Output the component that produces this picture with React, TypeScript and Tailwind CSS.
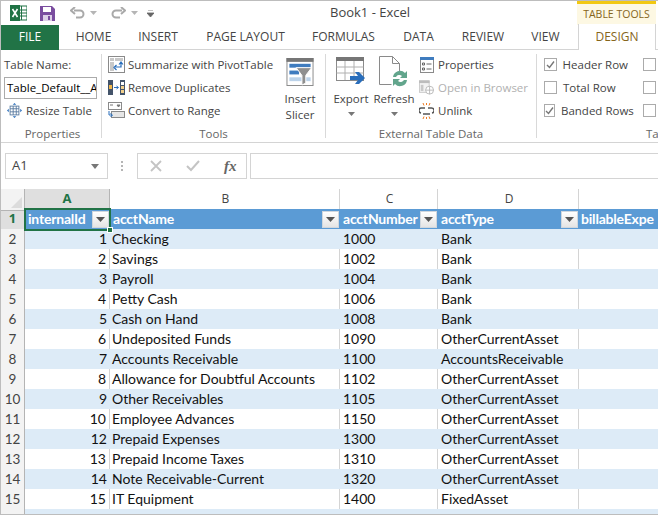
import React from "react";

const ui = { fontFamily: '"Open Sans","Noto Sans",sans-serif' };
const cellFont = { fontFamily: 'Lato,"Open Sans",sans-serif' };

const rows: [number, string, string, string][] = [
  [1, "Checking", "1000", "Bank"],
  [2, "Savings", "1002", "Bank"],
  [3, "Payroll", "1004", "Bank"],
  [4, "Petty Cash", "1006", "Bank"],
  [5, "Cash on Hand", "1008", "Bank"],
  [6, "Undeposited Funds", "1090", "OtherCurrentAsset"],
  [7, "Accounts Receivable", "1100", "AccountsReceivable"],
  [8, "Allowance for Doubtful Accounts", "1102", "OtherCurrentAsset"],
  [9, "Other Receivables", "1105", "OtherCurrentAsset"],
  [10, "Employee Advances", "1150", "OtherCurrentAsset"],
  [12, "Prepaid Expenses", "1300", "OtherCurrentAsset"],
  [13, "Prepaid Income Taxes", "1310", "OtherCurrentAsset"],
  [14, "Note Receivable-Current", "1320", "OtherCurrentAsset"],
  [15, "IT Equipment", "1400", "FixedAsset"],
];

const cols = "grid grid-cols-[24px_85px_230px_98px_141px_79px]";

function Filter() {
  return (
    <span className="flex h-[17px] w-[17px] shrink-0 items-center justify-center border border-[#d0d7de] bg-gradient-to-b from-white to-[#e4e4e4]">
      <svg width="9" height="5" viewBox="0 0 9 5"><path d="M0 0h9L4.500 5z" fill="#555" /></svg>
    </span>
  );
}

function HeaderCell({ label }: { label: string }) {
  return (
    <div className="flex h-5 items-center justify-between overflow-hidden pl-[3px] pr-px">
      <span className="text-[14px] leading-[22px] font-bold tracking-[-0.2px] whitespace-nowrap text-white">{label}</span>
      <Filter />
    </div>
  );
}

function Tab({ label, w }: { label: string; w: string }) {
  return <div className={`flex h-[25px] items-center justify-center text-[12px] text-[#444] ${w}`}>{label}</div>;
}

function RibbonRow({ icon, label, muted }: { icon: React.ReactNode; label: string; muted?: boolean }) {
  return (
    <div className={`flex h-[23px] items-center gap-[3px] text-[11.500px] whitespace-nowrap ${muted ? "text-[#b1b1b1]" : "text-[#444]"}`}>
      <span className="flex w-[17px] justify-center">{icon}</span>
      {label}
    </div>
  );
}

function Check({ label, checked }: { label?: string; checked?: boolean }) {
  return (
    <div className="flex h-[23px] items-center gap-[6px] text-[11.500px] whitespace-nowrap text-[#444]">
      <span className="flex h-[13px] w-[13px] items-center justify-center border border-[#ababab] bg-white">
        {checked && (
          <svg width="9" height="9" viewBox="0 0 9 9"><path d="M1 5l2.500 2.500L8 1.500" fill="none" stroke="#777" strokeWidth="1.400" /></svg>
        )}
      </span>
      {label}
    </div>
  );
}

function GroupLabel({ label }: { label: string }) {
  return <div className="mt-auto text-center text-[11.500px] leading-[16px] whitespace-nowrap text-[#666]">{label}</div>;
}

function Separator() {
  return <div className="my-[4px] w-px shrink-0 bg-[#d9d9d9]" />;
}

function GridRow({ n, data }: { n: number; data: [number, string, string, string] }) {
  const band = n % 2 === 0;
  const fill = band ? "bg-[#ddebf7]" : "bg-white border-r border-[#d4d4d4]";
  return (
    <div className={`${cols} h-5 text-[14px] text-[#111]`}>
      <div className="flex items-center justify-center border-r border-b border-[#b4b4b4] bg-[#f3f3f3] text-[13.500px] text-[#444]">{n}</div>
      <div className={`border-b border-b-[#9bc2e6] pr-[3px] text-right leading-[20px] ${fill}`}>{data[0]}</div>
      <div className={`border-b border-b-[#9bc2e6] pl-[2px] leading-[20px] whitespace-nowrap ${fill}`}>{data[1]}</div>
      <div className={`border-b border-b-[#9bc2e6] pl-[3px] leading-[20px] ${fill}`}>{data[2]}</div>
      <div className={`border-b border-b-[#9bc2e6] pl-[3px] leading-[20px] whitespace-nowrap ${fill}`}>{data[3]}</div>
      <div className={`border-b border-[#9bc2e6] ${band ? "bg-[#ddebf7]" : "bg-white"}`} />
    </div>
  );
}

const PivotIcon = (
  <svg width="17" height="17" viewBox="0 0 17 17">
    <rect x=".5" y=".5" width="16" height="16" fill="#fff" stroke="#8a8a8a" />
    <path d="M2 2h4v3H2zM7 2h8v3H7zM2 6h4v9H2z" fill="#c8c8c8" />
    <path d="M13 7v4H7m1.500-2L6 11.500 8.500 14M11 8.500L13 6l2 2.500" fill="none" stroke="#2a6ebb" strokeWidth="1.200" />
  </svg>
);
const DupIcon = (
  <svg width="17" height="17" viewBox="0 0 17 17">
    <rect x="0" y="1" width="5" height="15" fill="#44546a" />
    <rect x="1" y="6" width="3" height="4" fill="#f2b84b" />
    <rect x="12" y="1" width="5" height="15" fill="#44546a" />
    <rect x="13" y="3" width="3" height="3" fill="#fff" />
    <rect x="13" y="7" width="3" height="3" fill="#f2cf8a" />
    <rect x="13" y="11" width="3" height="3" fill="#f2cf8a" />
    <path d="M6 8.500h4m-1.500-1.500L10.500 8.500 8.500 10" fill="none" stroke="#2a6ebb" />
  </svg>
);
const ConvertIcon = (
  <svg width="17" height="17" viewBox="0 0 17 17">
    <rect x=".5" y=".5" width="13" height="7" fill="#fff" stroke="#8a8a8a" />
    <path d="M2 3h3M9 3l1.500 2L12 3z" fill="#777" stroke="#777" />
    <rect x="3.500" y="9.500" width="13" height="6" fill="#e6e6e6" stroke="#8a8a8a" />
    <path d="M1 9v4h3M2.500 11.500L4.500 13 2.500 15" fill="none" stroke="#2a6ebb" />
  </svg>
);
const ResizeIcon = (
  <svg width="15" height="15" viewBox="0 0 17 17">
    <rect x="3.500" y="3.500" width="10" height="10" fill="#fff" stroke="#56789e" />
    <path d="M3.500 6.500h10M3.500 10h10M7 3.500v10M10.500 3.500v10" stroke="#56789e" fill="none" />
    <path d="M8.500 0l2 2h-4zM8.500 17l2-2h-4zM0 8.500l2-2v4zM17 8.500l-2-2v4z" fill="#2a6ebb" />
  </svg>
);
const SlicerIcon = (
  <svg width="28" height="28" viewBox="0 0 28 29">
    <rect x=".5" y=".5" width="27" height="28" fill="#fff" stroke="#8a8a8a" />
    <rect x="0" y="0" width="28" height="4" fill="#767676" />
    <rect x="3" y="6" width="22" height="4" fill="#3f7cbf" />
    <rect x="3" y="13" width="10" height="4" fill="#3f7cbf" />
    <rect x="3" y="20" width="22" height="4" fill="#bcd3ea" />
    <path d="M10 10h16l-6 8v8l-4 2V18z" fill="#8f8f8f" stroke="#fff" />
  </svg>
);
const ExportIcon = (
  <svg width="31" height="29" viewBox="0 0 31 29">
    <rect x=".5" y=".5" width="27" height="23" fill="#fff" stroke="#8a8a8a" />
    <rect x="0" y="0" width="28" height="4" fill="#767676" />
    <path d="M.5 10h27M.5 16h27M9 4v19M18 4v19" stroke="#b0b0b0" />
    <path d="M14 19h8l-3-4h4l6 6-6 6h-4l3-4h-8z" fill="#2a6ebb" />
  </svg>
);
const RefreshIcon = (
  <svg width="30" height="31" viewBox="0 0 30 31">
    <path d="M.5.500h13l7 7v9M.5.500v28h12" fill="none" stroke="#8a8a8a" />
    <path d="M13.500.500v7h7" fill="none" stroke="#8a8a8a" />
    <path d="M14 21a7 7 0 0 1 12-4l2-2v7h-7l2-2a4 4 0 0 0-6 1zM28 24a7 7 0 0 1-12 4l-2 2v-7h7l-2 2a4 4 0 0 0 6-1z" fill="#62a58c" />
  </svg>
);
const PropsIcon = (
  <svg width="14" height="16" viewBox="0 0 14 16">
    <rect x=".5" y=".5" width="13" height="15" fill="#fff" stroke="#8a8a8a" />
    <rect x="0" y="0" width="14" height="3" fill="#3f7cbf" />
    <path d="M2.500 6h2v2h-2zM2.500 11h2v2h-2z" fill="none" stroke="#666" />
    <path d="M6.500 7h5M6.500 12h5" stroke="#666" />
  </svg>
);
const BrowserIcon = (
  <svg width="15" height="15" viewBox="0 0 17 16">
    <rect x=".5" y=".5" width="11" height="13" fill="#f2f2f2" stroke="#c8c8c8" />
    <rect x="0" y="0" width="12" height="3" fill="#bcbcbc" />
    <rect x="2" y="5" width="3" height="7" fill="#c8c8c8" />
    <circle cx="12" cy="11" r="4.500" fill="#fff" stroke="#b5b5b5" />
    <path d="M7.500 11h9M12 6.500v9" stroke="#b5b5b5" />
  </svg>
);
const UnlinkIcon = (
  <svg width="15" height="16" viewBox="0 0 15 16">
    <path d="M6 5H3a2.500 2.500 0 0 0-1 5M9 5h3a2.500 2.500 0 0 1 1 5M4 11h7" fill="none" stroke="#555" strokeWidth="1.500" />
    <path d="M4 0l1 2.500M11 0l-1 2.500M4 16l1-2.500M11 16l-1-2.500M7.500 0v2M7.500 14v2" stroke="#ee7b22" />
  </svg>
);

function Caret() {
  return <svg width="7" height="4" viewBox="0 0 7 4"><path d="M0 0h7L3.500 4z" fill="#777" /></svg>;
}

export default function App() {
  return (
    <div style={ui} className="flex h-[515px] w-[658px] flex-col overflow-hidden border-t border-b border-l border-[#bdbdbd] bg-white">
      {/* title bar */}
      <div className="flex h-[24px] shrink-0 items-center">
        <svg className="ml-[9px]" width="17" height="16" viewBox="0 0 17 16">
          <rect x="6" y="1" width="11" height="14" fill="#fff" stroke="#1f7244" />
          <path d="M6 5h11M6 8h11M6 11h11M11.500 1v14" stroke="#1f7244" />
          <rect x="0" y="0" width="10" height="16" fill="#1f7244" />
          <path d="M2.500 4l5 8M7.500 4l-5 8" stroke="#fff" strokeWidth="1.600" />
        </svg>
        <svg className="ml-[13px]" width="15" height="15" viewBox="0 0 15 15">
          <path d="M0 0h12l3 3v12H0z" fill="#7a4d9f" />
          <rect x="3" y="1" width="8" height="5" fill="#fff" />
          <rect x="3" y="9" width="9" height="6" fill="#ddd0e8" />
          <rect x="8" y="10" width="2" height="4" fill="#7a4d9f" />
        </svg>
        <svg className="ml-[15px]" width="15" height="13" viewBox="0 0 15 13">
          <path d="M4 3.500h6a3.500 3.500 0 0 1 0 7H6M5 0L1 3.500 5 7" fill="none" stroke="#a9a9a9" strokeWidth="2" />
        </svg>
        <svg className="ml-[5px]" width="7" height="4" viewBox="0 0 7 4"><path d="M0 0h7L3.500 4z" fill="#b5b5b5" /></svg>
        <svg className="ml-[14px]" width="15" height="13" viewBox="0 0 15 13">
          <path d="M11 3.500H5a3.500 3.500 0 0 0 0 7h4M10 0l4 3.500L10 7" fill="none" stroke="#a9a9a9" strokeWidth="2" />
        </svg>
        <svg className="ml-[5px]" width="7" height="4" viewBox="0 0 7 4"><path d="M0 0h7L3.500 4z" fill="#b5b5b5" /></svg>
        <svg className="ml-[9px]" width="7" height="7" viewBox="0 0 7 7"><path d="M1 0h5M0 3h7L3.500 7z" stroke="#666" fill="#666" strokeWidth=".8" /></svg>
        <div className="ml-[176px] w-[82px] text-[13px] whitespace-nowrap text-[#444]">Book1 - Excel</div>
        <div className="ml-[165px] flex h-[24px] w-[79px] items-center justify-center border-t-[3px] border-[#f2c811] bg-[#fdf8e3] text-[10.500px] whitespace-nowrap text-[#86651a]">
          TABLE TOOLS
        </div>
      </div>

      {/* tabs */}
      <div className="relative flex h-[25px] shrink-0 items-center border-b border-[#d4d4d4]">
        <div className="flex h-[25px] w-[58px] items-center justify-center bg-[#217346] text-[12px] text-white">FILE</div>
        <Tab label="HOME" w="w-[69px]" />
        <Tab label="INSERT" w="w-[60px]" />
        <Tab label="PAGE LAYOUT" w="w-[115px]" />
        <Tab label="FORMULAS" w="w-[81px]" />
        <Tab label="DATA" w="w-[69px]" />
        <Tab label="REVIEW" w="w-[60px]" />
        <Tab label="VIEW" w="w-[65px]" />
        <div className="flex h-[26px] w-[78px] items-center justify-center border-x border-[#d4d4d4] bg-white text-[12px] text-[#86651a]">DESIGN</div>
      </div>

      {/* ribbon */}
      <div className="flex h-[93px] shrink-0 border-b border-[#d4d4d4]">
        <div className="flex w-[100px] shrink-0 flex-col pt-[3px] pl-[3px]">
          <div className="flex h-[23px] items-center text-[11.500px] whitespace-nowrap text-[#444]">Table Name:</div>
          <div className="flex h-[23px] items-center">
            <div className="flex h-[22px] w-[93px] items-center overflow-hidden border border-[#ababab] pl-[2px] text-[11.500px] whitespace-nowrap text-black">Table_Default__A</div>
          </div>
          <div className="pl-[2px]">
            <RibbonRow icon={ResizeIcon} label="Resize Table" />
          </div>
          <GroupLabel label="Properties" />
        </div>
        <Separator />
        <div className="flex w-[223px] shrink-0 flex-col pt-[3px]">
          <div className="flex pl-[6px]">
            <div className="w-[177px]">
              <RibbonRow icon={PivotIcon} label="Summarize with PivotTable" />
              <RibbonRow icon={DupIcon} label="Remove Duplicates" />
              <RibbonRow icon={ConvertIcon} label="Convert to Range" />
            </div>
            <div className="flex w-[30px] flex-col items-center pt-[5px] text-center text-[11.500px] leading-[16px] text-[#444]">
              {SlicerIcon}
              <div className="mt-[5px]">Insert</div>
              <div>Slicer</div>
            </div>
          </div>
          <GroupLabel label="Tools" />
        </div>
        <Separator />
        <div className="flex w-[210px] shrink-0 flex-col pt-[3px]">
          <div className="flex">
            <div className="flex w-[46px] flex-col items-center pt-[4px] pl-[4px] text-[11.500px] text-[#444]">
              {ExportIcon}
              <div className="mt-[5px] leading-[16px]">Export</div>
              <div className="mt-[5px]"><Caret /></div>
            </div>
            <div className="flex w-[44px] flex-col items-center pt-[3px] text-[11.500px] text-[#444]">
              {RefreshIcon}
              <div className="mt-[4px] leading-[16px]">Refresh</div>
              <div className="mt-[5px]"><Caret /></div>
            </div>
            <div className="pl-[2px]">
              <RibbonRow icon={PropsIcon} label="Properties" />
              <RibbonRow icon={BrowserIcon} label="Open in Browser" muted />
              <RibbonRow icon={UnlinkIcon} label="Unlink" />
            </div>
          </div>
          <GroupLabel label="External Table Data" />
        </div>
        <Separator />
        <div className="flex min-w-0 flex-1 flex-col pt-[3px] pl-[7px]">
          <div className="flex gap-[15px]">
            <div className="w-[84px]">
              <Check label="Header Row" checked />
              <Check label="Total Row" />
              <Check label="Banded Rows" checked />
            </div>
            <div>
              <Check />
              <Check />
              <Check />
            </div>
          </div>
          <div className="mt-auto pl-[102px] text-[11.500px] leading-[16px] text-[#666]">Ta</div>
        </div>
      </div>

      {/* formula bar */}
      <div className="flex h-[46px] shrink-0 items-center">
        <div className="ml-[4px] flex h-[26px] w-[103px] items-center justify-between border border-[#d4d4d4] pr-[8px] pl-[6px] text-[13px] text-[#444]">
          A1
          <svg width="8" height="5" viewBox="0 0 8 5"><path d="M0 0h8L4 5z" fill="#777" /></svg>
        </div>
        <svg className="mx-[13px]" width="3" height="11" viewBox="0 0 3 11"><path d="M0 0h2v2H0zM0 4h2v2H0zM0 8h2v2H0z" fill="#b5b5b5" /></svg>
        <div className="flex h-[26px] w-[110px] items-center border border-[#d4d4d4] pl-[12px]">
          <svg width="12" height="12" viewBox="0 0 12 12"><path d="M1 1l10 10M11 1L1 11" stroke="#c4c4c4" strokeWidth="1.800" /></svg>
          <svg className="ml-[24px]" width="14" height="12" viewBox="0 0 14 12"><path d="M1 6l4 4 8-9" fill="none" stroke="#c4c4c4" strokeWidth="2" /></svg>
          <span className="ml-[24px] text-[15px] font-bold text-[#666] italic" style={{ fontFamily: '"Liberation Serif",serif' }}>fx</span>
        </div>
        <div className="ml-[3px] h-[26px] flex-1 border-y border-l border-[#d4d4d4]" />
      </div>

      {/* sheet */}
      <div style={cellFont} className="flex min-h-0 flex-1 flex-col">
        <div style={ui} className={`${cols} h-5 shrink-0 text-[12px] text-[#444]`}>
          <div className="relative border-r border-b border-[#b4b4b4] bg-[#f3f3f3]">
            <svg className="absolute right-[2px] bottom-[2px]" width="11" height="11" viewBox="0 0 11 11"><path d="M11 0v11H0z" fill="#dcdcdc" /></svg>
          </div>
          <div className="flex items-center justify-center border-r border-b-2 border-[#b4b4b4] border-b-[#217346] bg-[#dfdfdf] text-[13px] font-bold text-[#217346]">A</div>
          <div className="flex items-center justify-center border-r border-b border-[#d4d4d4] pl-[2px]">B</div>
          <div className="flex items-center justify-center border-r border-b border-[#d4d4d4] pl-[2px]">C</div>
          <div className="flex items-center justify-center border-r border-b border-[#d4d4d4] pl-[2px]">D</div>
          <div className="border-b border-[#d4d4d4]" />
        </div>
        <div className={`${cols} h-5 shrink-0 bg-[#5b9bd5]`}>
          <div style={ui} className="flex items-center justify-center border-r border-b border-[#b4b4b4] bg-[#dfdfdf] text-[13px] font-bold text-[#217346]">1</div>
          <div className="relative">
            <HeaderCell label="internalId" />
            <div className="pointer-events-none absolute -top-px -right-px -bottom-px -left-px border-2 border-[#217346]" />
            <div className="absolute -right-[3px] -bottom-[3px] h-[6px] w-[6px] border border-white bg-[#217346]" />
          </div>
          <HeaderCell label="acctName" />
          <HeaderCell label="acctNumber" />
          <HeaderCell label="acctType" />
          <div className="flex h-5 items-center overflow-hidden pl-[2px]">
            <span className="text-[14px] leading-[22px] font-bold tracking-[-0.2px] whitespace-nowrap text-white">billableExpe</span>
          </div>
        </div>
        {rows.map((r, i) => (
          <GridRow key={i} n={i + 2} data={r} />
        ))}
        <div className={`${cols} min-h-0 flex-1`}>
          <div className="border-r border-[#b4b4b4] bg-[#f3f3f3]" />
          <div className="col-span-5 bg-[#ddebf7]" />
        </div>
      </div>
    </div>
  );
}
